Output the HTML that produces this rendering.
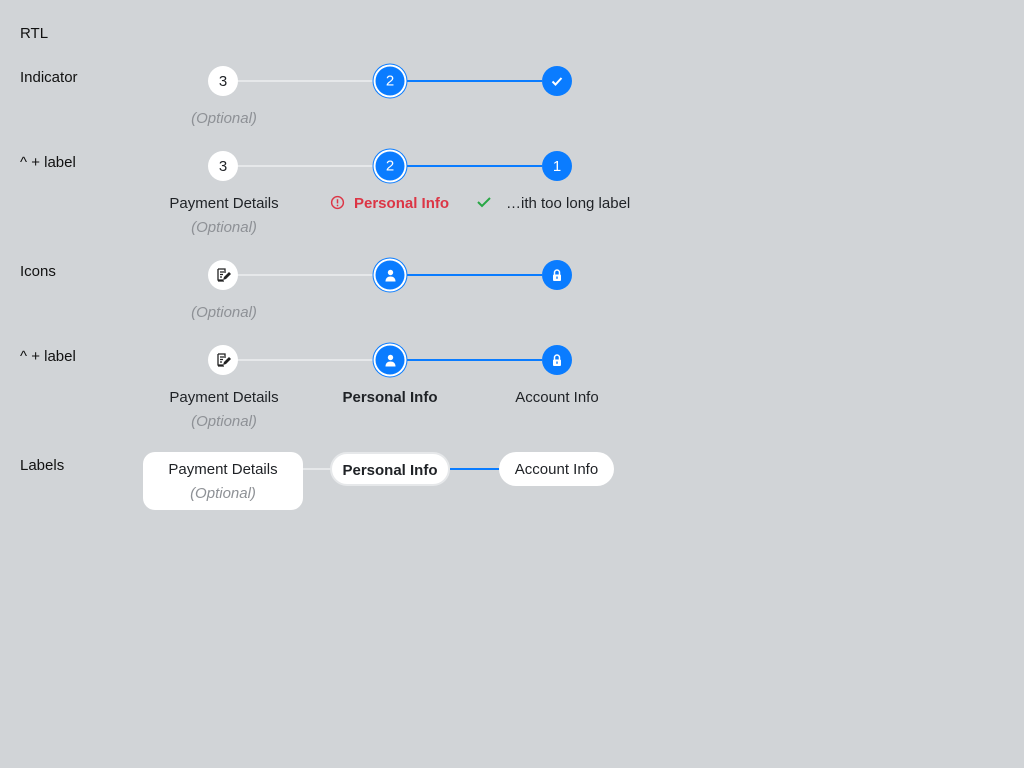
<!DOCTYPE html><html><head><style>
body{margin:0;width:1024px;height:768px;background:#d1d4d7;font-family:"Liberation Sans",Arial,sans-serif;font-size:15px;color:#1f2226;position:relative;overflow:hidden}
.a{position:absolute;white-space:nowrap}
.l{left:20px;color:#111}
.c{position:absolute;width:30px;height:30px;border-radius:50%;background:#fff;display:flex;align-items:center;justify-content:center;font-size:15px;transform:translate(-15px,-15px)}
.b{background:#0a7cff;color:#fff}
.act{box-shadow:0 0 0 2px #fff,0 0 0 3px #0a7cff;width:29px;height:29px;transform:translate(-14.5px,-14.5px)}
.ln{position:absolute;height:2px}
.g{background:#e6e8ea}.bl{background:#0a7cff}
.t{position:absolute;transform:translateX(-50%);text-align:center;white-space:nowrap}
.o{color:#8e9196;font-style:italic}
.pill{position:absolute;background:#fff;border-radius:17px;display:flex;align-items:center;justify-content:center}
</style></head><body>
<div class="a l" style="top:25px">RTL</div>
<div class="a l" style="top:69px">Indicator</div>
<div class="a l" style="top:154px">^ + label</div>
<div class="a l" style="top:263px">Icons</div>
<div class="a l" style="top:348px">^ + label</div>
<div class="a l" style="top:457px">Labels</div>

<!-- row1 -->
<div class="ln g" style="left:238px;width:137px;top:80px"></div>
<div class="ln bl" style="left:405px;width:137px;top:80px"></div>
<div class="c" style="left:223px;top:81px">3</div>
<div class="c b act" style="left:390px;top:81px">2</div>
<div class="c b" style="left:557px;top:81px"><svg width="14" height="14" viewBox="0 0 14 14"><path d="M2.5 7.5l3 3 6-6.5" stroke="#fff" stroke-width="2" fill="none"/></svg></div>
<div class="t o" style="left:224px;top:110px">(Optional)</div>

<!-- row2 -->
<div class="ln g" style="left:238px;width:137px;top:165px"></div>
<div class="ln bl" style="left:405px;width:137px;top:165px"></div>
<div class="c" style="left:223px;top:166px">3</div>
<div class="c b act" style="left:390px;top:166px">2</div>
<div class="c b" style="left:557px;top:166px">1</div>
<div class="t" style="left:224px;top:195px">Payment Details</div>
<div class="t o" style="left:224px;top:219px">(Optional)</div>
<div class="a" style="left:330px;top:195px;color:#dc3545;font-weight:bold"><svg width="15" height="15" viewBox="0 0 16 16" style="vertical-align:-2px;margin-right:9px"><circle cx="8" cy="8" r="6.3" stroke="#dc3545" stroke-width="1.5" fill="none"/><path d="M8 4.5v4.5" stroke="#dc3545" stroke-width="1.6"/><circle cx="8" cy="11.2" r="0.9" fill="#dc3545"/></svg>Personal Info</div>
<div class="a" style="left:476px;top:195px"><svg width="16" height="14" viewBox="0 0 16 14" style="vertical-align:-1px;margin-right:14px"><path d="M2 7l4 4 8-8" stroke="#28a745" stroke-width="2" fill="none"/></svg>…ith too long label</div>

<!-- row3 -->
<div class="ln g" style="left:238px;width:137px;top:274px"></div>
<div class="ln bl" style="left:405px;width:137px;top:274px"></div>
<div class="c" style="left:223px;top:275px"><svg width="16" height="16" viewBox="0 0 16 16"><path d="M3 2h7v4M3 2v11h5M5 5h4M5 7.5h3M5 10h2M3 14h6" stroke="#222" stroke-width="1.3" fill="none"/><path d="M8 13l1-3 5-5 2 2-5 5z" fill="#222"/></svg></div>
<div class="c b act" style="left:390px;top:275px"><svg width="14" height="14" viewBox="0 0 14 14"><circle cx="7" cy="4" r="2.7" fill="#fff"/><path d="M2 13c0-3.5 2.2-5 5-5s5 1.5 5 5z" fill="#fff"/></svg></div>
<div class="c b" style="left:557px;top:275px"><svg width="12" height="14" viewBox="0 0 12 14"><path d="M3.5 6.5V4.5a2.5 2.5 0 015 0v2" stroke="#fff" stroke-width="1.5" fill="none"/><rect x="2" y="6.5" width="8" height="6.5" rx="1" fill="#fff"/><rect x="5.3" y="8.5" width="1.4" height="2.3" fill="#0a7cff"/></svg></div>
<div class="t o" style="left:224px;top:304px">(Optional)</div>

<!-- row4 -->
<div class="ln g" style="left:238px;width:137px;top:359px"></div>
<div class="ln bl" style="left:405px;width:137px;top:359px"></div>
<div class="c" style="left:223px;top:360px"><svg width="16" height="16" viewBox="0 0 16 16"><path d="M3 2h7v4M3 2v11h5M5 5h4M5 7.5h3M5 10h2M3 14h6" stroke="#222" stroke-width="1.3" fill="none"/><path d="M8 13l1-3 5-5 2 2-5 5z" fill="#222"/></svg></div>
<div class="c b act" style="left:390px;top:360px"><svg width="14" height="14" viewBox="0 0 14 14"><circle cx="7" cy="4" r="2.7" fill="#fff"/><path d="M2 13c0-3.5 2.2-5 5-5s5 1.5 5 5z" fill="#fff"/></svg></div>
<div class="c b" style="left:557px;top:360px"><svg width="12" height="14" viewBox="0 0 12 14"><path d="M3.5 6.5V4.5a2.5 2.5 0 015 0v2" stroke="#fff" stroke-width="1.5" fill="none"/><rect x="2" y="6.5" width="8" height="6.5" rx="1" fill="#fff"/><rect x="5.3" y="8.5" width="1.4" height="2.3" fill="#0a7cff"/></svg></div>
<div class="t" style="left:224px;top:389px">Payment Details</div>
<div class="t o" style="left:224px;top:413px">(Optional)</div>
<div class="t" style="left:390px;top:389px;font-weight:bold">Personal Info</div>
<div class="t" style="left:557px;top:389px">Account Info</div>

<!-- row5 -->
<div class="ln g" style="left:303px;width:28px;top:468px"></div>
<div class="ln bl" style="left:450px;width:50px;top:468px"></div>
<div class="pill" style="left:143px;top:452px;width:160px;height:58px;border-radius:12px;flex-direction:column;line-height:24px;padding-top:2px;box-sizing:border-box"><span>Payment Details</span><span class="o">(Optional)</span></div>
<div class="pill" style="left:330px;top:452px;width:116px;height:30px;border:2px solid #e6e8ea;font-weight:bold;padding-top:2px;box-sizing:content-box;height:28px">Personal Info</div>
<div class="pill" style="left:499px;top:452px;width:115px;height:34px;padding-top:1px;box-sizing:border-box">Account Info</div>
</body></html>
